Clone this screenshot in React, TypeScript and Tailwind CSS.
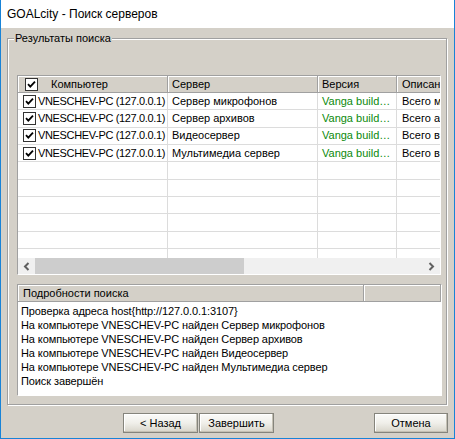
import { ReactNode } from "react";

const rows = [
  { server: "Сервер микрофонов", info: "Всего микрофонов: 1" },
  { server: "Сервер архивов", info: "Всего архивов: 1" },
  { server: "Видеосервер", info: "Всего видеокамер: 4" },
  { server: "Мультимедиа сервер", info: "Всего видеопотоков: 2" },
];

const log = [
  "Проверка адреса host{http://127.0.0.1:3107}",
  "На компьютере VNESCHEV-PC найден Сервер микрофонов",
  "На компьютере VNESCHEV-PC найден Сервер архивов",
  "На компьютере VNESCHEV-PC найден Видеосервер",
  "На компьютере VNESCHEV-PC найден Мультимедиа сервер",
  "Поиск завершён",
];

const cols = "grid grid-cols-[150px_150px_79px_140px]";

function Check() {
  return (
    <svg width="13" height="13" viewBox="0 0 13 13" className="shrink-0">
      <rect x="0.5" y="0.5" width="12" height="12" fill="#fff" stroke="#333" />
      <polyline
        points="3,6.2 5.3,8.6 10,3.6"
        fill="none"
        stroke="#000"
        strokeWidth="1.8"
      />
    </svg>
  );
}

function HeadCell({ children, className = "" }: { children?: ReactNode; className?: string }) {
  return (
    <div
      className={`h-[17px] flex items-center border-r border-b border-[#a0a0a0] bg-[#d4d0c8] shadow-[inset_1px_1px_0_#fff] whitespace-nowrap overflow-hidden ${className}`}
    >
      {children}
    </div>
  );
}

function Cell({ children, className = "" }: { children?: ReactNode; className?: string }) {
  return (
    <div
      className={`h-[17.33px] flex items-center border-r border-b border-[#dcdcdc] whitespace-nowrap overflow-hidden ${className}`}
    >
      {children}
    </div>
  );
}

function Chevron({ dir }: { dir: "left" | "right" }) {
  return (
    <svg width="7" height="9" viewBox="0 0 7 9">
      <polyline
        points={dir === "left" ? "5.5,1 2,4.5 5.5,8" : "1.5,1 5,4.5 1.5,8"}
        fill="none"
        stroke="#606060"
        strokeWidth="2"
      />
    </svg>
  );
}

function Button({ children, className = "" }: { children: ReactNode; className?: string }) {
  return (
    <button
      className={`h-[20px] flex items-center justify-center border border-[#85847c] bg-gradient-to-b from-[#fbfbf9] via-[#f0efea] to-[#d8d5ca] shadow-[inset_-1px_-1px_0_#c4c0b4,inset_1px_1px_0_#fff] text-black ${className}`}
    >
      {children}
    </button>
  );
}

export default function App() {
  return (
    <div className="w-[455px] h-[439px] flex flex-col bg-[#d4d0c8] border-x border-b border-[#1883d7] text-[11px] leading-[13px] text-black font-['Liberation_Sans',sans-serif]">
      {/* title bar */}
      <div className="h-[28px] shrink-0 bg-white flex items-center pl-[6px] text-[12px]">
        GOALcity - Поиск серверов
      </div>

      <div className="flex-1 flex flex-col">
        {/* group box */}
        <div className="relative mt-[10px] ml-[6px] w-[440px] h-[367px] border border-[#a0a0a0] shadow-[inset_1px_1px_0_#fff,1px_1px_0_#fff] pl-[9px] pt-[36px]">
          <span className="absolute -top-[7px] left-[6px] px-[1px] bg-[#d4d0c8]">
            Результаты поиска
          </span>

          {/* servers list */}
          <div className="w-[424px] h-[200px] border border-[#a0a0a0] border-r-white border-b-white bg-white flex flex-col overflow-hidden">
            <div className={`${cols} shrink-0`}>
              <HeadCell className="pl-[7px] gap-[13px]">
                <Check />
                Компьютер
              </HeadCell>
              <HeadCell className="pl-[4px]">Сервер</HeadCell>
              <HeadCell className="pl-[4px]">Версия</HeadCell>
              <HeadCell className="pl-[5px]">Описание</HeadCell>
            </div>
            <div className="flex-1 overflow-hidden">
              {[0, 1, 2, 3, 4, 5, 6, 7, 8, 9].map((i) => {
                const r = rows[i];
                return (
                  <div key={i} className={cols}>
                    <Cell className="pl-[5px] gap-[2px]">
                      {r && (
                        <>
                          <Check />
                          <span className="tracking-[-0.35px]">VNESCHEV-PC (127.0.0.1)</span>
                        </>
                      )}
                    </Cell>
                    <Cell className="pl-[4px]">{r?.server}</Cell>
                    <Cell className="pl-[4px] text-[#0b8a0b]">{r && "Vanga build…"}</Cell>
                    <Cell className="pl-[5px]">{r?.info}</Cell>
                  </div>
                );
              })}
            </div>
            {/* horizontal scrollbar */}
            <div className="h-[16px] shrink-0 flex bg-[#f0f0f0]">
              <div className="w-[17px] flex items-center justify-center">
                <Chevron dir="left" />
              </div>
              <div className="w-[209px] bg-[#cdcdcd]" />
              <div className="flex-1" />
              <div className="w-[17px] flex items-center justify-center">
                <Chevron dir="right" />
              </div>
            </div>
          </div>

          {/* search details */}
          <div className="mt-[9px] w-[425px] h-[112px] border border-[#a0a0a0] border-r-white border-b-white bg-white flex flex-col">
            <div className="grid grid-cols-[346px_1fr] shrink-0">
              <HeadCell className="pl-[5px]">Подробности поиска</HeadCell>
              <HeadCell />
            </div>
            <div className="pt-[2px] pl-[3px] tracking-[-0.1px]">
              {log.map((line) => (
                <div key={line} className="h-[14px] leading-[14px] whitespace-nowrap">
                  {line}
                </div>
              ))}
            </div>
          </div>
        </div>

        {/* dialog buttons */}
        <div className="mt-[8px] flex pl-[122px] pr-[6px] gap-[1px]">
          <Button className="w-[75px]">&lt; Назад</Button>
          <Button className="w-[75px]">Завершить</Button>
          <Button className="w-[74px] ml-auto">Отмена</Button>
        </div>
      </div>
    </div>
  );
}
